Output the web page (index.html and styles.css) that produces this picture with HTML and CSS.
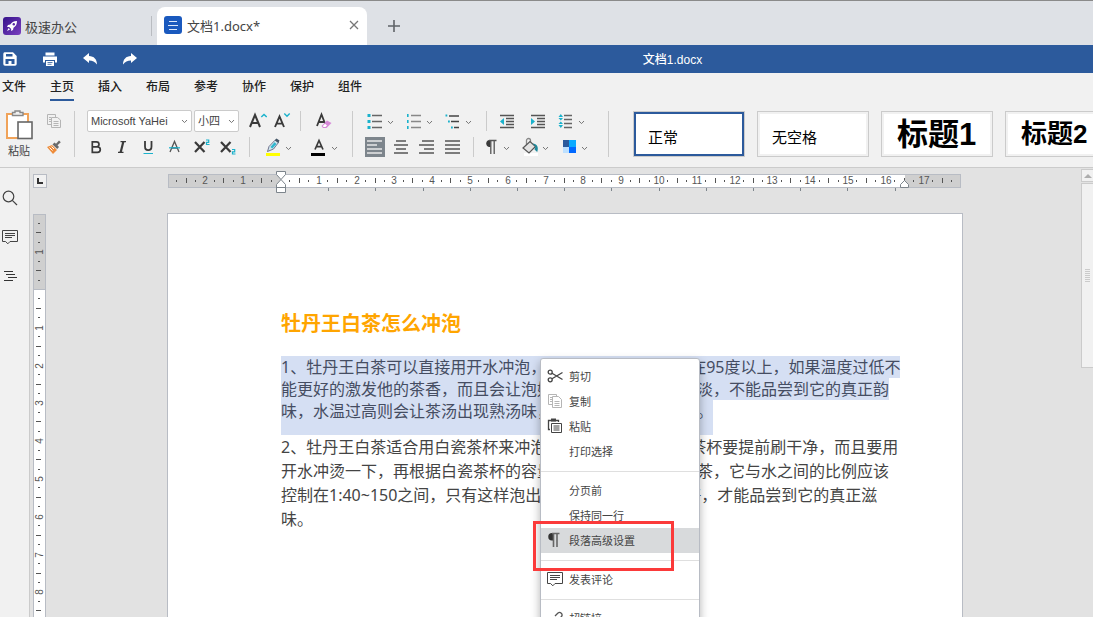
FILE: index.html
```
<!DOCTYPE html>
<html lang="zh-CN">

<head>
  <meta charset="UTF-8">
  <meta name="viewport" content="width=device-width, initial-scale=1.0">
  <title>文档1.docx</title>
  <link rel="stylesheet" href="styles.css">
</head>

<body>
  <svg class="defs">
    <symbol id="chev" viewBox="0 0 7 5">
      <path d="M1 1 L3.5 3.6 L6 1" fill="none" stroke="#777" />
    </symbol>
  </svg>

  <header class="tabs">
    <a class="app" href="#">
      <svg width="18" height="18" viewBox="0 0 18 18">
        <defs>
          <linearGradient id="purple" x1="0" y1="0" x2="1" y2="1">
            <stop offset="0" stop-color="#35138a" />
            <stop offset="1" stop-color="#7a3fc0" />
          </linearGradient>
        </defs>
        <rect width="18" height="18" rx="3" fill="url(#purple)" />
        <path d="M14 4 C10.5 4 8.5 5.5 7.2 7.6 L5 8 L4 10 L6.2 9.9 L8.2 12 L8 14 L10 13 L10.5 10.8 C12.8 9.4 14 7.4 14 4 Z" fill="#fff" />
        <path d="M5.6 11 L4 14 L7 12.5 Z" fill="#fff" />
        <circle cx="10.8" cy="7.2" r="1.2" fill="#5a2aa5" />
      </svg>
      极速办公
    </a>
    <div class="tab">
      <svg width="18" height="18" viewBox="0 0 18 18">
        <rect width="18" height="18" rx="3" fill="#1a59be" />
        <path d="M5 5.5 H13 M4 9.5 H14 M5 13.5 H13" stroke="#dce8fa" fill="none" />
      </svg>
      <span class="tab-name">文档1.docx*</span>
      <button class="close" aria-label="关闭">
        <svg width="10" height="10" viewBox="0 0 10 10"><path d="M1 1 L9 9 M9 1 L1 9" stroke="#777" stroke-width="1.3" /></svg>
      </button>
    </div>
    <button class="new" aria-label="新建">
      <svg width="14" height="14" viewBox="0 0 14 14"><path d="M7 1 V13 M1 7 H13" stroke="#5f6368" stroke-width="1.6" /></svg>
    </button>
  </header>

  <div class="titlebar">
    <button aria-label="保存">
      <svg width="14" height="14" viewBox="0 0 14 14">
        <path d="M1.5 0.3 H10 L13.7 4 V12 Q13.7 13.7 12 13.7 H2 Q0.3 13.7 0.3 12 V2 Q0.3 0.3 1.5 0.3 Z" fill="#fff" />
        <path d="M3 2 H9.5 V4.6 H3 Z M2.5 7 H11.5 V12 H8.5 V9 H5.5 V12 H2.5 Z" fill="#2c5a9c" />
      </svg>
    </button>
    <button aria-label="打印">
      <svg width="14" height="14" viewBox="0 0 14 14">
        <path d="M2.5 0.5 H11.5 V3.5 H2.5 Z M0 4.5 H14 V10.5 H12 V8 H2 V10.5 H0 Z M3 9 H11 V14 H3 Z" fill="#fff" />
        <path d="M4.5 10.5 H9.5 M4.5 12.3 H8.5" stroke="#2c5a9c" stroke-width="0.8" />
      </svg>
    </button>
    <button aria-label="撤销">
      <svg width="14" height="12" viewBox="0 0 14 12"><path d="M0 5 L6 0 V3 C11 3 14 6.5 14 11.5 C12 8.5 9.5 7.4 6 7.4 V10 Z" fill="#fff" /></svg>
    </button>
    <button aria-label="恢复">
      <svg width="14" height="12" viewBox="0 0 14 12"><path d="M14 5 L8 0 V3 C3 3 0 6.5 0 11.5 C2 8.5 4.5 7.4 8 7.4 V10 Z" fill="#fff" /></svg>
    </button>
    <h1>文档1.docx</h1>
  </div>

  <nav class="menu">
    <a href="#">文件</a>
    <a href="#" class="active">主页</a>
    <a href="#">插入</a>
    <a href="#">布局</a>
    <a href="#">参考</a>
    <a href="#">协作</a>
    <a href="#">保护</a>
    <a href="#">组件</a>
  </nav>

  <div class="toolbar">
    <div class="group clip">
      <button class="paste">
        <svg width="28" height="30" viewBox="0 0 28 30">
          <rect x="2" y="4" width="21" height="24" fill="#fff" stroke="#f0a35a" stroke-width="2" />
          <path d="M7.5 5.5 V2.5 H10 V1 H15 V2.5 H18 V5.5 Z" fill="#f1f1f1" stroke="#888" stroke-width="1.4" />
          <rect x="13" y="12" width="14" height="16.5" fill="#fff" stroke="#666" stroke-width="1.6" />
        </svg>
        粘贴
      </button>
      <div class="clip-side">
        <button aria-label="复制">
          <svg width="16" height="16" viewBox="0 0 16 16" fill="#f1f1f1" stroke="#b5b5b5">
            <path d="M1.5 1.5 H9.5 V11.5 H1.5 Z M3 4.5 H5 M3 6.5 H5 M3 8.5 H5" />
            <path d="M5.5 4.5 H11.5 L14.5 7 V14.5 H5.5 Z M7.5 8.5 H12.5 M7.5 10.5 H12.5 M7.5 12.5 H12.5" />
          </svg>
        </button>
        <button aria-label="格式刷">
          <svg width="16" height="16" viewBox="0 0 16 16">
            <path d="M1 8 L6 6 L11 11 L7 15 Z" fill="#ee8c3a" />
            <path d="M3.5 8.5 L6.5 11.5 M5.5 7.5 L8 10" stroke="#fff" />
            <path d="M6.5 5.5 L8.5 3.5 L10 4.8 L13 1.5 L14.8 3.2 L11.5 6.3 L13 8 L11.2 10 Z" fill="#6b6b6b" />
          </svg>
        </button>
      </div>
    </div>

    <div class="group font">
      <div class="row top">
        <label class="pick pick-font">
          <select aria-label="字体"><option>Microsoft YaHei</option></select>
          <svg width="7" height="5"><use href="#chev" /></svg>
        </label>
        <label class="pick pick-size">
          <select aria-label="字号"><option>小四</option></select>
          <svg width="7" height="5"><use href="#chev" /></svg>
        </label>
        <button class="ico" aria-label="增大字号">
          <svg width="20" height="20" viewBox="0 0 20 20" fill="none">
            <path d="M3 16 L8 3.8 L13 16 M4.8 12 H11.2" stroke="#3a3a3a" stroke-width="2" />
            <path d="M14.3 6 L17 3.4 L19.7 6" stroke="#1ab2cc" stroke-width="1.4" />
          </svg>
        </button>
        <button class="ico" aria-label="减小字号">
          <svg width="20" height="20" viewBox="0 0 20 20" fill="none">
            <path d="M2 16 L6.5 5.5 L11 16 M3.6 12.6 H9.4" stroke="#3a3a3a" stroke-width="1.9" />
            <path d="M11.3 2.6 L14 5.2 L16.7 2.6" stroke="#1ab2cc" stroke-width="1.4" />
          </svg>
        </button>
        <i class="sep"></i>
        <button class="ico" aria-label="清除格式">
          <svg width="20" height="20" viewBox="0 0 20 20" fill="none">
            <path d="M3 15 L7.5 3.5 L12 15 M4.6 11 H10" stroke="#3a3a3a" stroke-width="1.8" />
            <path d="M7.5 15 L13 9.5 L17.5 12 L12.5 17 H9 Z" fill="#d68ad8" />
            <path d="M8.8 15 L11 12.8 L13 14.5 L11.5 16 H9.5 Z" fill="#fff" />
          </svg>
        </button>
      </div>
      <div class="row">
        <button class="ico" aria-label="加粗">
          <svg width="20" height="20" viewBox="0 0 20 20" fill="none" stroke="#3a3a3a" stroke-width="1.7">
            <path d="M6.3 4.8 H10.5 A2.4 2.4 0 0 1 10.5 9.8 H6.3 Z M6.3 9.8 H11.5 A2.8 2.8 0 0 1 11.5 15.4 H6.3 Z" />
          </svg>
        </button>
        <button class="ico" aria-label="斜体">
          <svg width="20" height="20" viewBox="0 0 20 20" fill="none" stroke="#3a3a3a">
            <path d="M8.5 4.7 H14 M6 15.3 H11.5" stroke-width="1.3" />
            <path d="M11.4 4.5 L8.6 15.5" stroke-width="2.2" />
          </svg>
        </button>
        <button class="ico" aria-label="下划线">
          <svg width="20" height="20" viewBox="0 0 20 20" fill="none">
            <path d="M7 4 V9.5 Q7 13.2 10.2 13.2 Q13.5 13.2 13.5 9.5 V4" stroke="#3a3a3a" stroke-width="1.8" />
            <path d="M5.5 16.5 H15" stroke="#1ab2cc" />
          </svg>
        </button>
        <button class="ico" aria-label="删除线">
          <svg width="20" height="20" viewBox="0 0 20 20" fill="none">
            <path d="M6 15 L10.5 4.5 L15 15 M7.6 11 H13.4" stroke="#555" stroke-width="1.3" />
            <path d="M5 10.8 H16" stroke="#1ab2cc" stroke-width="1.2" />
          </svg>
        </button>
        <button class="ico" aria-label="上标">
          <svg width="20" height="20" viewBox="0 0 20 20" fill="none">
            <path d="M5 5 L14.5 15 M14.5 5 L5 15" stroke="#3a3a3a" stroke-width="2.2" />
            <path d="M16 3 H18.7 V5.3 H16.5 V7.5 H19.5" stroke="#1ab2cc" stroke-width="1.2" />
          </svg>
        </button>
        <button class="ico" aria-label="下标">
          <svg width="20" height="20" viewBox="0 0 20 20" fill="none">
            <path d="M5 5 L14.5 15 M14.5 5 L5 15" stroke="#3a3a3a" stroke-width="2.2" />
            <path d="M16 12.5 H18.7 V14.8 H16.5 V17 H19.5" stroke="#1ab2cc" stroke-width="1.2" />
          </svg>
        </button>
        <i class="sep"></i>
        <button class="drop" aria-label="突出显示">
          <svg width="20" height="20" viewBox="0 0 20 20">
            <path d="M4.5 14.5 L6 9.5 L12 3.2 L15.5 5.5 L10.5 12 Z" fill="#cfe6ee" stroke="#557" stroke-width="0.8" />
            <path d="M11.8 3 L13.5 1.5 L16.5 3.5 L15.3 6 Z" fill="#456" />
            <path d="M7.5 10 L9.3 11.5 L13.5 7 L11.5 5.3 Z" fill="#2fb6cf" />
            <rect x="3" y="16" width="14" height="3" fill="#ff0" />
          </svg>
          <svg width="7" height="5"><use href="#chev" /></svg>
        </button>
        <button class="drop" aria-label="字体颜色">
          <svg width="20" height="20" viewBox="0 0 20 20" fill="none">
            <path d="M6 12.5 L10 3.5 L14 12.5 M7.5 9.7 H12.5" stroke="#3a3a3a" stroke-width="1.7" />
            <rect x="2" y="16" width="14" height="3" fill="#000" />
          </svg>
          <svg width="7" height="5"><use href="#chev" /></svg>
        </button>
      </div>
    </div>

    <div class="group para">
      <div class="row top">
        <button class="drop" aria-label="项目符号">
          <svg width="20" height="20" viewBox="0 0 20 20">
            <path d="M7 4.5 H17 M7 10.5 H17 M7 16.5 H17" stroke="#666" stroke-width="1.4" />
            <path d="M2.5 4.5 h3 M2.5 10.5 h3 M2.5 16.5 h3" stroke="#1ab2cc" stroke-width="3" />
          </svg>
          <svg width="7" height="5"><use href="#chev" /></svg>
        </button>
        <button class="drop" aria-label="编号">
          <svg width="20" height="20" viewBox="0 0 20 20">
            <path d="M7 4.5 H17 M7 10.5 H17 M7 16.5 H17" stroke="#888" stroke-width="1.4" />
            <path d="M3 4.5 h1.6 M3 10.5 h1.6 M3 16.5 h1.6" stroke="#1ab2cc" stroke-width="3" />
          </svg>
          <svg width="7" height="5"><use href="#chev" /></svg>
        </button>
        <button class="drop" aria-label="多级列表">
          <svg width="20" height="20" viewBox="0 0 20 20">
            <path d="M6 5 H16 M8 10.5 H16 M11 16.5 H16" stroke="#444" stroke-width="1.4" />
            <path d="M2.5 4.5 h1.8 M5 10.5 h1.8 M8 16.5 h1.8" stroke="#1ab2cc" stroke-width="2" />
          </svg>
          <svg width="7" height="5"><use href="#chev" /></svg>
        </button>
        <i class="sep"></i>
        <button class="ico" aria-label="减少缩进">
          <svg width="20" height="20" viewBox="0 0 20 20">
            <path d="M3 4.5 H17 M9 7.5 H17 M9 10.5 H17 M9 13.5 H17 M3 16.5 H17" stroke="#555" stroke-width="1.3" />
            <path d="M3 10.5 L7 7 V14 Z" fill="#1ab2cc" />
          </svg>
        </button>
        <button class="ico" aria-label="增加缩进">
          <svg width="20" height="20" viewBox="0 0 20 20">
            <path d="M3 4.5 H17 M9 7.5 H17 M9 10.5 H17 M9 13.5 H17 M3 16.5 H17" stroke="#555" stroke-width="1.3" />
            <path d="M7 10.5 L3 7 V14 Z" fill="#1ab2cc" />
          </svg>
        </button>
        <button class="drop" aria-label="行距">
          <svg width="20" height="20" viewBox="0 0 20 20">
            <path d="M8 4.5 H16 M8 8.5 H16 M8 12.5 H16 M8 16.5 H16" stroke="#666" stroke-width="1.4" />
            <path d="M2.5 6 L4.8 3 L7 6 Z M2.5 7 L4.8 9.5 L7 7 Z M2.5 13 L4.8 10.5 L7 13 Z M2.5 14 L4.8 17 L7 14 Z" fill="#1ab2cc" />
          </svg>
          <svg width="7" height="5"><use href="#chev" /></svg>
        </button>
      </div>
      <div class="row">
        <button class="ico" aria-label="左对齐">
          <svg class="on" width="20" height="20" viewBox="0 0 20 20">
            <path d="M2 4 H17 M2 8 H12 M2 12 H17 M2 16 H17" stroke="#e8e8e8" stroke-width="1.4" />
          </svg>
        </button>
        <button class="ico" aria-label="居中">
          <svg width="20" height="20" viewBox="0 0 20 20"><path d="M5 4 H15 M3 8 H17 M5 12 H15 M3 16 H17" stroke="#555" stroke-width="1.4" /></svg>
        </button>
        <button class="ico" aria-label="右对齐">
          <svg width="20" height="20" viewBox="0 0 20 20"><path d="M5 4 H17 M2 8 H17 M7 12 H17 M2 16 H17" stroke="#555" stroke-width="1.4" /></svg>
        </button>
        <button class="ico" aria-label="两端对齐">
          <svg width="20" height="20" viewBox="0 0 20 20"><path d="M2 4 H17 M2 8 H17 M2 12 H17 M2 16 H17" stroke="#555" stroke-width="1.4" /></svg>
        </button>
        <i class="sep"></i>
        <button class="drop" aria-label="段落标记">
          <svg width="20" height="20" viewBox="0 0 20 20">
            <path d="M9.5 3 V10 H8 A3.6 3.6 0 0 1 8 3 Z" fill="#3a3a3a" />
            <path d="M8 3.5 H15.5 M9.8 3 V17 M13.2 3 V17" stroke="#555" stroke-width="1.3" />
          </svg>
          <svg width="7" height="5"><use href="#chev" /></svg>
        </button>
        <button class="drop" aria-label="底纹">
          <svg width="20" height="20" viewBox="0 0 20 20">
            <rect x="4" y="16" width="14" height="3" fill="#fff" />
            <path d="M6.5 9 V3.5 A2 2 0 0 1 10.5 3.5 V6" fill="none" stroke="#888" stroke-width="1.3" />
            <path d="M3 11 L10 4.5 L15.5 9.5 L9 16 Z" fill="#e2e2e2" stroke="#555" stroke-width="1.2" />
            <path d="M12.5 6.5 C17 7 19 10 17.2 15 L14.5 12.5 L15.5 9.5 Z" fill="#1d8a9c" />
          </svg>
          <svg width="7" height="5"><use href="#chev" /></svg>
        </button>
        <button class="drop" aria-label="颜色方案">
          <svg width="20" height="20" viewBox="0 0 20 20">
            <path d="M4 3 h6 v7 h-6 Z" fill="#2c5a9c" />
            <path d="M10 3 h7 v7 h-7 Z" fill="#0aaaff" />
            <path d="M4 10 h6 v6 h-6 Z" fill="#bde0ff" />
            <path d="M10 10 h7 v6 h-7 Z" fill="#0068ff" />
          </svg>
          <svg width="7" height="5"><use href="#chev" /></svg>
        </button>
      </div>
    </div>

    <div class="styles">
      <button class="style selected">正常</button>
      <button class="style">无空格</button>
      <button class="style h1">标题1</button>
      <button class="style h2">标题2</button>
    </div>
  </div>

  <main class="work">
    <aside class="side">
      <button aria-label="查找">
        <svg width="16" height="16" viewBox="0 0 16 16" fill="none" stroke="#444" stroke-width="1.2">
          <circle cx="6.5" cy="6.5" r="5.3" />
          <path d="M10.3 10.3 L15 15" />
        </svg>
      </button>
      <button aria-label="评论">
        <svg width="16" height="16" viewBox="0 0 16 16" fill="none" stroke="#444">
          <path d="M0.5 1.5 H15.5 V12.5 H8 L5.8 14.8 L3.6 12.5 H0.5 Z M3 4.5 H13 M3 6.5 H13 M3 8.5 H10" />
        </svg>
      </button>
      <button aria-label="导航">
        <svg width="16" height="16" viewBox="0 0 16 16" fill="none" stroke="#333">
          <path d="M2 3.5 H11 M4 6.5 H13 M6 9.5 H15 M2 12.5 H11" />
        </svg>
      </button>
    </aside>

    <div class="vside">
      <button class="tabstop" aria-label="制表符">
        <svg width="6" height="6" viewBox="0 0 6 6"><path d="M1 0 V5 H6" stroke="#333" stroke-width="2" fill="none" /></svg>
      </button>
      <svg id="vruler"></svg>
    </div>

    <section class="canvas">
      <svg id="hruler" width="796" height="26"></svg>
      <article class="page">
        <h2>牡丹王白茶怎么冲泡</h2>
        <p class="picked">
          <span>1、牡丹王白茶可以直接用开水冲泡，但是水温一定要控制在95度以上，如果温度过低不</span>
          <span>能更好的激发他的茶香，而且会让泡好的茶汤味道变得比较淡，不能品尝到它的真正韵</span>
          <span>味，水温过高则会让茶汤出现熟汤味，影响到茶汤的口感度。</span>
        </p>
        <p class="plain">2、牡丹王白茶适合用白瓷茶杯来冲泡，冲泡之前要将白瓷茶杯要提前刷干净，而且要用<br>开水冲烫一下，再根据白瓷茶杯的容量放入适量的牡丹王白茶，它与水之间的比例应该<br>控制在1:40~150之间，只有这样泡出来的茶汤味道才会更好，才能品尝到它的真正滋<br>味。</p>

        <div class="context">
          <button>
            <svg width="16" height="16" viewBox="0 0 16 16" fill="none" stroke="#444" stroke-width="1.3">
              <circle cx="3.2" cy="4.2" r="2" />
              <circle cx="3.2" cy="11.8" r="2" />
              <path d="M5 5.2 L15.5 11.5 M5 10.8 L15.5 4.5" />
            </svg>
            剪切
          </button>
          <button>
            <svg width="16" height="16" viewBox="0 0 16 16" fill="#fff" stroke="#b5b5b5">
              <path d="M1.5 1.5 H9.5 V11.5 H1.5 Z M3 4.5 H5 M3 6.5 H5 M3 8.5 H5" />
              <path d="M5.5 3.5 H11.5 L14.5 6.5 V14.5 H5.5 Z M7.5 8.5 H12.5 M7.5 10.5 H12.5 M7.5 12.5 H12.5" />
            </svg>
            复制
          </button>
          <button>
            <svg width="16" height="16" viewBox="0 0 16 16" fill="#fff" stroke="#444">
              <path d="M3 11.5 H1.5 V2.5 H11.5 V4" stroke-width="1.3" />
              <path d="M4 2 H9" stroke-width="3" />
              <path d="M4.5 5.5 H14.5 V14.5 H4.5 Z M6.5 8 H12.5 M6.5 10 H12.5 M6.5 12 H12.5" />
            </svg>
            粘贴
          </button>
          <button><i class="blank"></i>打印选择</button>
          <hr>
          <button><i class="blank"></i>分页前</button>
          <button><i class="blank"></i>保持同一行</button>
          <button class="hot">
            <svg width="16" height="16" viewBox="0 0 16 16">
              <path d="M6.5 1 V8.5 H5 A3.7 3.7 0 0 1 5 1 Z" fill="#333" />
              <path d="M5 1.5 H12.5 M6.5 1 V15 M10 1 V15" stroke="#666" stroke-width="1.6" />
            </svg>
            段落高级设置
          </button>
          <hr>
          <button>
            <svg width="16" height="16" viewBox="0 0 16 16" fill="none" stroke="#444">
              <path d="M0.5 1.5 H15.5 V12.5 H8 L5.8 14.8 L3.6 12.5 H0.5 Z M3 4.5 H13 M3 6.5 H13 M3 8.5 H10" />
            </svg>
            发表评论
          </button>
          <hr>
          <button>
            <svg width="16" height="16" viewBox="0 0 16 16" fill="none" stroke="#555" stroke-width="1.3">
              <path d="M8 6 L11 3 A2.5 2.5 0 0 1 14.5 6.5 L11.5 9.5 A2.5 2.5 0 0 1 8 9.5 M10 12 L8 14 A2.5 2.5 0 0 1 4.5 10.5 L7 8" />
            </svg>
            超链接
          </button>
        </div>
        <div class="mark"></div>
      </article>
    </section>

    <div class="scroll">
      <button class="up" aria-label="向上滚动">
        <svg width="8" height="4" viewBox="0 0 8 4"><path d="M4 0 L8 4 H0 Z" fill="#adadad" /></svg>
      </button>
      <div class="thumb"><i class="grip"></i></div>
    </div>
  </main>
  <script src="script.js"></script>
</body>

</html>
```
FILE: styles.css
```
* {
  margin: 0;
  padding: 0;
  box-sizing: border-box;
}
body {
  height: 100vh;
  overflow: hidden;
  display: flex;
  flex-direction: column;
  font-family: "Liberation Sans", "Noto Sans CJK SC", sans-serif;
  font-size: 12px;
  color: #444;
  background: #e2e2e2;
}
button {
  border: 0;
  background: none;
  font: inherit;
  color: inherit;
  display: flex;
  align-items: center;
  justify-content: center;
}
a {
  color: inherit;
  text-decoration: none;
}
svg {
  display: block;
  flex: none;
}
.defs {
  position: absolute;
  width: 0;
  height: 0;
}

/* window tabs */
.tabs {
  height: 45px;
  flex: none;
  display: flex;
  align-items: center;
  padding-top: 6px;
  background: #dee1e6;
  border-top: 1px solid #8a8a8a;
  font-family: "Noto Sans", "Noto Sans CJK SC", sans-serif;
  font-size: 13px;
}
.app {
  width: 152px;
  height: 20px;
  padding-left: 3px;
  display: flex;
  align-items: center;
  gap: 4px;
  border-right: 1px solid #b9bcc1;
}
.tab {
  width: 210px;
  height: 38px;
  margin-left: 5px;
  padding: 0 8px 2px 7px;
  display: flex;
  align-items: center;
  gap: 5px;
  background: #fff;
  border-radius: 8px 8px 0 0;
}
.tab-name {
  flex: 1;
}
.new {
  width: 54px;
}

/* title bar */
.titlebar {
  height: 28px;
  flex: none;
  display: flex;
  align-items: center;
  gap: 20px;
  background: #2c5a9c;
  color: #fff;
}
.titlebar button {
  width: 20px;
  height: 28px;
}
.titlebar h1 {
  flex: 1;
  margin-left: 92px;
  padding-bottom: 2px;
  text-align: center;
  font-size: 12px;
  font-weight: 500;
}

.menu {
  height: 30px;
  flex: none;
  display: flex;
  gap: 24px;
  padding-left: 2px;
  background: #f1f1f1;
  font-weight: 500;
  color: #222;
}
.menu a {
  height: 28px;
  line-height: 28px;
}
.menu .active {
  border-bottom: 2px solid #2c5a9c;
}

/* toolbar */
.toolbar {
  height: 65px;
  flex: none;
  display: flex;
  padding-top: 5px;
  background: #f1f1f1;
  border-bottom: 1px solid #cbcbcb;
  overflow: hidden;
}
.group {
  flex: none;
  height: 52px;
  position: relative;
}
.group::after {
  content: "";
  position: absolute;
  right: 0;
  top: 3px;
  height: 46px;
  border-right: 1px solid #cbcbcb;
}
.row {
  display: flex;
  align-items: center;
  height: 26px;
}
.clip {
  width: 75px;
  display: flex;
  padding-left: 5px;
}
.paste {
  width: 28px;
  height: 52px;
  flex-direction: column;
  gap: 2px;
  font-size: 11px;
  white-space: nowrap;
}
.clip-side {
  display: flex;
  flex-direction: column;
  margin-left: 12px;
}
.clip-side button {
  width: 18px;
  height: 28px;
}
.font {
  width: 278px;
  padding-left: 8px;
}
.para {
  width: 256px;
  padding-left: 9px;
}
.pick {
  position: relative;
  height: 22px;
}
.pick select {
  appearance: none;
  width: 100%;
  height: 22px;
  padding: 0 3px;
  border: 1px solid #cbcbcb;
  border-radius: 2px;
  background: #fff;
  color: #444;
  font-family: "Liberation Sans", "Noto Sans CJK SC", sans-serif;
  font-size: 11px;
}
.pick svg {
  position: absolute;
  right: 4px;
  top: 9px;
}
.pick-font {
  width: 105px;
  margin-left: 4px;
}
.pick-size {
  width: 45px;
  margin: 0 5px 0 2px;
}
.ico {
  width: 26px;
  height: 26px;
}
.ico .on {
  background: #7d858c;
}
.drop {
  width: 39px;
  height: 26px;
  padding-left: 3px;
  justify-content: flex-start;
  gap: 2px;
}
.drop svg + svg {
  margin-top: 3px;
}
.sep {
  flex: none;
  height: 20px;
  border-left: 1px solid #cbcbcb;
  margin: 0 4px 0 7px;
}
.font .drop {
  width: 46px;
}
.font .sep {
  margin: 0 10px;
}
.font .top .sep {
  margin-left: 4px;
}
.para .top .ico {
  width: 31px;
}
.styles {
  flex: 1;
  display: flex;
  gap: 12px;
  padding: 3px 0 3px 24px;
}
.style {
  flex: none;
  width: 112px;
  height: 46px;
  padding: 4px 0 0 14px;
  justify-content: flex-start;
  background: #fff;
  border: 1px solid #cbcbcb;
  box-shadow: inset 0 0 0 2px #f1f1f1;
  color: #000;
  font-size: 15px;
  white-space: nowrap;
}
.style.selected {
  box-shadow: inset 0 0 0 2px #2c5a9c;
}
.style.h1,
.style.h2 {
  padding: 0 0 6px 15px;
  font-weight: bold;
}
.style.h1 {
  font-size: 31px;
}
.style.h2 {
  font-size: 26px;
}

/* work area */
.work {
  flex: 1;
  min-height: 0;
  display: flex;
  overflow: hidden;
}
.side {
  width: 30px;
  flex: none;
  display: flex;
  flex-direction: column;
  gap: 15px;
  padding-top: 18px;
  background: #f1f1f1;
  border-right: 1px solid #cbcbcb;
}
.side button {
  width: 20px;
  height: 24px;
}
.vside {
  width: 19px;
  flex: none;
  display: flex;
  flex-direction: column;
  padding: 6px 0 0 3px;
}
.tabstop {
  flex: none;
  width: 14px;
  height: 14px;
  margin-bottom: 26px;
  background: #f1f1f1;
  border: 1px solid #b8bcc4;
}
#vruler {
  width: 14px;
  flex: 1;
  min-height: 0;
}
.canvas {
  flex: 1;
  min-width: 0;
  display: flex;
  flex-direction: column;
  align-items: center;
}
.page {
  position: relative;
  flex: 1;
  width: 796px;
  margin-top: 19px;
  padding: 94px 60px 0 113px;
  background: #fff;
  border: 1px solid #b8bcc4;
  border-bottom: 0;
  font-family: "Noto Sans", "Noto Sans CJK SC", sans-serif;
  white-space: nowrap;
}
.page h2 {
  line-height: 32px;
  margin-bottom: 16px;
  font-size: 20px;
  color: #ffa500;
}
.page p {
  font-size: 16px;
}
.picked span {
  display: block;
  width: fit-content;
  line-height: 22px;
  background: #d5dff3;
  color: #454d62;
}
.picked span:last-child {
  padding-bottom: 13px;
}
.plain {
  line-height: 24px;
}

/* context menu */
.context {
  position: absolute;
  left: 372px;
  top: 144px;
  width: 160px;
  padding: 5px 0;
  background: #fff;
  border: 1px solid #b8bcc4;
  border-radius: 3px;
  box-shadow: 0 4px 10px rgba(0, 0, 0, 0.3);
  font-size: 11px;
}
.context button {
  width: 100%;
  height: 25px;
  padding: 0 0 2px 6px;
  gap: 6px;
  justify-content: flex-start;
}
.context .hot {
  background: #d8dadc;
}
.context hr {
  border: 0;
  border-top: 1px solid #dfdfdf;
  margin: 7px 0 6px;
}
.blank {
  width: 16px;
}
.mark {
  position: absolute;
  left: 365px;
  top: 307px;
  width: 141px;
  height: 50px;
  border: 3px solid #fb3a3a;
}

/* scrollbar */
.scroll {
  width: 12px;
  flex: none;
  padding-top: 1px;
}
.up,
.thumb {
  width: 13px;
  background: #f1f1f1;
  border: 1px solid #cbcbcb;
}
.up {
  height: 13px;
}
.thumb {
  height: 185px;
  margin-top: 1px;
  display: flex;
  align-items: center;
  justify-content: center;
}
.grip {
  width: 5px;
  height: 13px;
  background: repeating-linear-gradient(#cbcbcb 0 1px, #f1f1f1 1px 2px);
}

/* rulers */
.edge {
  fill: #fff;
  stroke: #b8bcc4;
}
.margin {
  fill: #cfcfcf;
}
.tick {
  stroke: #555;
}
.stop {
  stroke: #7d858c;
}
.num {
  font-size: 10px;
  fill: #555;
  text-anchor: middle;
}
.handle {
  fill: #fff;
  stroke: #7d858c;
}
```
FILE: script.js
```
const NS = 'http://www.w3.org/2000/svg'
const CM = 37.8

function add(parent, name, attrs, text) {
  const el = document.createElementNS(NS, name)
  for (const key in attrs) {
    el.setAttribute(key, attrs[key])
  }
  if (text) {
    el.textContent = text
  }
  parent.appendChild(el)
}

// quarter marks are dots, half marks are lines, whole marks are numbers
function marks(origin, from, to, draw) {
  for (let q = from; q <= to; q++) {
    if (q === 0) continue
    const pos = Math.round(origin + q * CM / 4)
    if (q % 4 === 0) {
      draw(pos, 0, String(Math.abs(q / 4)))
    } else {
      draw(pos, q % 2 === 0 ? 5 : 2)
    }
  }
}

const h = document.getElementById('hruler')
add(h, 'rect', { x: 1.5, y: 6.5, width: 792, height: 13, class: 'edge' })
add(h, 'rect', { x: 2, y: 7, width: 112, height: 12, class: 'margin' })
add(h, 'rect', { x: 738, y: 7, width: 55, height: 12, class: 'margin' })
marks(114, -11, 71, function (x, size, label) {
  if (label) {
    add(h, 'text', { x: x, y: 16, class: 'num' }, label)
  } else {
    const top = size === 5 ? 10 : 12
    add(h, 'path', { d: `M${x - 0.5} ${top} v${size}`, class: 'tick' })
  }
})
for (let i = 1; i <= 13; i++) {
  const x = Math.round(114 + i * 47.2) + 0.5
  add(h, 'path', { d: `M${x} 20 v3`, class: 'stop' })
}
add(h, 'path', { d: 'M109.5 3.5 h9 v3 l-4.5 5 l-4.5 -5 Z', class: 'handle' })
add(h, 'path', { d: 'M109.5 24.5 v-8 l4.5 -5 l4.5 5 v8 Z M109.5 19.5 h9', class: 'handle' })
add(h, 'path', { d: 'M733.5 19.5 v-3 l4 -4 l4 4 v3 Z', class: 'handle' })

const v = document.getElementById('vruler')
const tall = v.getBoundingClientRect().height
add(v, 'rect', { x: 0.5, y: 0.5, width: 12, height: tall, class: 'edge' })
add(v, 'rect', { x: 1, y: 1, width: 11, height: 75, class: 'margin' })
add(v, 'path', { d: 'M0 75.5 h13', stroke: '#b8bcc4' })
marks(76, -7, Math.floor((tall - 80) * 4 / CM), function (y, size, label) {
  if (label) {
    add(v, 'text', { x: 0, y: 0, transform: `translate(10 ${y}) rotate(-90)`, class: 'num' }, label)
  } else {
    const left = size === 5 ? 3 : 5
    add(v, 'path', { d: `M${left} ${y - 0.5} h${size}`, class: 'tick' })
  }
})
```
